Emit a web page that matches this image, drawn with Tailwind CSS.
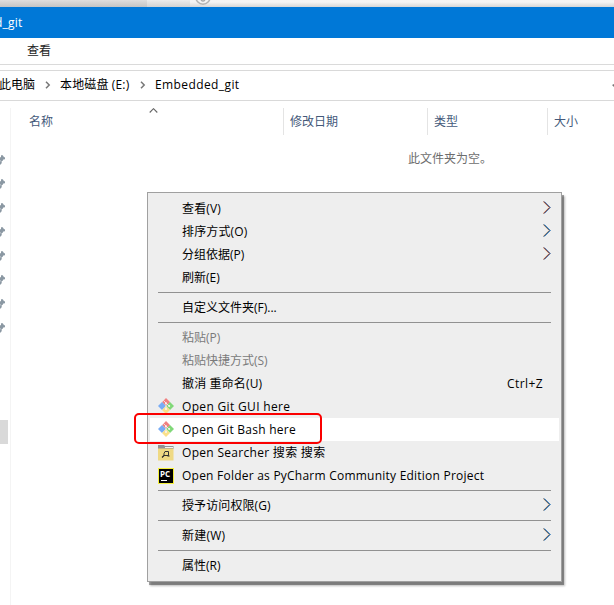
<!DOCTYPE html>
<html lang="zh-CN">
<head>
<meta charset="utf-8">
<title>Embedded_git</title>
<script src="https://cdn.jsdelivr.net/npm/@tailwindcss/browser@4"></script>
</head>
<body class="relative h-[605px] w-[614px] overflow-hidden bg-white font-['Open_Sans','Noto_Sans_CJK_SC',sans-serif] text-[12px] leading-[18px] text-black">
<svg class="hidden">
  <symbol id="chev" viewBox="0 0 8 14">
    <path d="M.2 .5L6.200 6.500L.2 12.500" fill="none" stroke="#e0a060" stroke-width="1"/>
    <path d="M1.500 .5L7.500 6.500L1.500 12.500" fill="none" stroke="#58a8e8" stroke-width="1"/>
    <path d="M.8 .5L6.800 6.500L.8 12.500" fill="none" stroke="currentColor" stroke-width="1"/>
  </symbol>
  <symbol id="crumb" viewBox="0 0 6 8"><path d="M1 .8L4.200 4L1 7.200" fill="none" stroke="#777" stroke-width="1.500"/></symbol>
  <symbol id="pin" viewBox="0 0 5 10"><path d="M0 2.500L1 2L1 0.300H2.800L4 2.300H5V4.200L3.300 4.500L2.500 6H1.700V8L.8 9.500H0V6.500H.4L.3 5H0Z" fill="#8b98a3"/></symbol>
  <symbol id="git" viewBox="0 0 16 16">
    <path d="M8 0L12.200 4.200L8 8L4 4.200Z" fill="#f08080"/>
    <path d="M12 4L16 8L12 12L8 8Z" fill="#80d878"/>
    <path d="M4 4L8 8L4 12L0 8Z" fill="#78acf5"/>
    <path d="M8 8L12 12L8 16L4 12Z" fill="#fae08a"/>
    <path d="M5.500 2.500L8 5V11M8 5L11 8" fill="none" stroke="#f4f4f4" stroke-width=".8"/>
    <circle cx="8" cy="5.200" r="1" fill="#f4f4f4"/><circle cx="8" cy="11" r="1" fill="#f4f4f4"/><circle cx="11.200" cy="8" r="1" fill="#f4f4f4"/>
  </symbol>
</svg>

<div class="flex h-[605px] flex-col">
  <div class="relative flex h-[7px] shrink-0 overflow-hidden">
    <div class="w-[147px] bg-linear-to-b from-[#dedede] to-[#c4c4c4]"></div>
    <div class="w-[43px] bg-linear-to-b from-[#ececec] to-[#d2d2d2]"></div>
    <div class="flex-1 bg-linear-to-b from-[#f4f4f4] from-30% to-[#d6d6d6]"></div>
    <svg class="absolute left-[194px] top-0 h-[7px] w-[18px]" viewBox="0 0 18 7"><circle cx="9" cy="-3" r="7.200" fill="none" stroke="#b4b4b4" stroke-width="1.500"/><path d="M7 0Q9 2 11 0" fill="none" stroke="#aaa" stroke-width="1.300"/></svg>
  </div>
  <header class="flex h-[31px] shrink-0 items-center overflow-hidden bg-[#0078d7] text-white"><span class="-ml-[5px] tracking-[0.200px]">d_git</span></header>
  <nav class="flex h-[27px] shrink-0 items-center border-b border-[#dadada] pl-[27px] text-[#222]">查看</nav>
  <div class="h-[5px] shrink-0"></div>
  <div class="flex h-[31px] shrink-0 items-center border-y border-[#d9d9d9] pb-px">
    <span class="-ml-px w-[46px] whitespace-nowrap">此电脑</span>
    <svg class="h-2 w-1.5"><use href="#crumb"/></svg>
    <span class="ml-[9px] w-[80px] whitespace-nowrap tracking-[0.150px]">本地磁盘 (E:)</span>
    <svg class="h-2 w-1.5"><use href="#crumb"/></svg>
    <span class="ml-[9px] tracking-[0.400px]">Embedded_git</span>
    <svg class="ml-auto h-1.5 w-0.5" viewBox="0 0 2 6"><path d="M0 3L2 2V5Z" fill="#777"/></svg>
  </div>
  <main class="flex flex-1">
    <aside class="mt-[7px] flex w-[11px] flex-col border-r border-[#f4f4f4] pt-[47px]">
      <div class="flex flex-col gap-[14px] text-[0px] leading-none">
        <svg class="h-2.5 w-[5px]"><use href="#pin"/></svg><svg class="h-2.5 w-[5px]"><use href="#pin"/></svg><svg class="h-2.5 w-[5px]"><use href="#pin"/></svg><svg class="h-2.5 w-[5px]"><use href="#pin"/></svg><svg class="h-2.5 w-[5px]"><use href="#pin"/></svg><svg class="h-2.5 w-[5px]"><use href="#pin"/></svg><svg class="h-2.5 w-[5px]"><use href="#pin"/></svg><svg class="h-2.5 w-[5px]"><use href="#pin"/></svg>
      </div>
      <div class="mt-[87px] h-6 w-2 bg-[#d9d9d9]"></div>
    </aside>
    <section class="flex-1 pt-[7px]">
      <div class="relative flex h-[27px] items-center text-[#44597a]">
        <div class="flex h-full w-[273px] items-center border-r border-[#e4e4e4] pl-[18px]">名称</div>
        <div class="flex h-full w-[144px] items-center border-r border-[#e4e4e4] pl-[6px]">修改日期</div>
        <div class="flex h-full w-[120px] items-center border-r border-[#e4e4e4] pl-[6px]">类型</div>
        <div class="pl-[6px]">大小</div>
        <svg class="absolute left-[138px] top-0 h-[5px] w-[9px]" viewBox="0 0 9 5"><path d="M.7 4.500L4.500 .7L8.300 4.500" fill="none" stroke="#666" stroke-width="1.100"/></svg>
      </div>
      <p class="mt-[15px] pl-[397px] text-[#6d6d6d]">此文件夹为空。</p>
    </section>
  </main>
</div>

<div class="absolute left-[147px] top-[192px] flex h-[390px] w-[415px] flex-col border border-[#a0a0a0] bg-[#eeeeee] px-0.5 py-1 shadow-[2px_3px_0px_0px_#00000055,3px_4px_2px_0px_#00000044] *:shrink-0">
  <div class="flex h-[23px] items-center justify-between pl-[32px] pr-[8px]"><span class="tracking-[0.150px]">查看(V)</span><svg class="mb-0.5 h-3.5 w-2 text-[#6d2530]"><use href="#chev"/></svg></div>
  <div class="flex h-[23px] items-center justify-between pl-[32px] pr-[8px]"><span class="tracking-[0.150px]">排序方式(O)</span><svg class="mb-0.5 h-3.5 w-2 text-[#24456f]"><use href="#chev"/></svg></div>
  <div class="flex h-[23px] items-center justify-between pl-[32px] pr-[8px]"><span>分组依据(P)</span><svg class="mb-0.5 h-3.5 w-2 text-[#6d2530]"><use href="#chev"/></svg></div>
  <div class="flex h-[23px] items-center pl-[32px]">刷新(E)</div>
  <div class="mx-2 my-[3px] h-px bg-[#919191]"></div>
  <div class="flex h-[23px] items-center pl-[32px]">自定义文件夹(F)...</div>
  <div class="mx-2 my-[3px] h-px bg-[#919191]"></div>
  <div class="flex h-[23px] items-center pl-[32px] text-[#7a7a7a]">粘贴(P)</div>
  <div class="flex h-[23px] items-center pl-[32px] text-[#7a7a7a]">粘贴快捷方式(S)</div>
  <div class="flex h-[23px] items-center justify-between pl-[32px] pr-[16px]"><span class="tracking-[0.150px]">撤消 重命名(U)</span><span class="tracking-[0.400px]">Ctrl+Z</span></div>
  <div class="flex h-[23px] items-center gap-2 pl-[8px]"><svg class="mb-px size-4"><use href="#git"/></svg><span class="tracking-[0.330px]">Open Git GUI here</span></div>
  <div class="flex h-[23px] items-center gap-2 bg-white pl-[8px]"><svg class="mb-px size-4"><use href="#git"/></svg><span class="tracking-[0.250px]">Open Git Bash here</span></div>
  <div class="flex h-[23px] items-center gap-2 pl-[8px]">
    <svg class="size-4" viewBox="0 0 16 16"><path d="M0 0H6L7 1H15.500V4H0Z" fill="#929292"/><path d="M7 2H15V3H7Z" fill="#f4f4f4"/><path d="M0 3.500H15.500V15.500H0Z" fill="#efd983"/><path d="M7 6.500H10.500V10.500H6V8.500Z" fill="none" stroke="#333" stroke-width="1"/><path d="M6 10.500L4 12.500M9.500 11H11.500" stroke="#222" stroke-width="1.100"/></svg>
    <span class="tracking-[0.300px]">Open Searcher 搜索 搜索</span></div>
  <div class="flex h-[23px] items-center gap-2 pl-[8px]">
    <span class="relative size-4 border border-[#f5f03c] bg-black text-white"><span class="absolute left-px top-px font-['Open_Sans',sans-serif] text-[8px] font-bold leading-[8px]">PC</span><span class="absolute bottom-[2px] left-[2px] h-px w-[6px] bg-white"></span></span>
    <span class="tracking-[0.230px]">Open Folder as PyCharm Community Edition Project</span></div>
  <div class="mx-2 my-[3px] h-px bg-[#919191]"></div>
  <div class="flex h-[23px] items-center justify-between pl-[32px] pr-[8px]"><span class="tracking-[0.100px]">授予访问权限(G)</span><svg class="mb-0.5 h-3.5 w-2 text-[#24456f]"><use href="#chev"/></svg></div>
  <div class="mx-2 my-[3px] h-px bg-[#919191]"></div>
  <div class="flex h-[23px] items-center justify-between pl-[32px] pr-[8px]"><span class="tracking-[0.200px]">新建(W)</span><svg class="mb-0.5 h-3.5 w-2 text-[#24456f]"><use href="#chev"/></svg></div>
  <div class="mx-2 my-[3px] h-px bg-[#919191]"></div>
  <div class="flex h-[23px] items-center pl-[32px]">属性(R)</div>
</div>
<div class="absolute left-[134px] top-[413px] h-[31px] w-[188px] rounded-[5px] border-2 border-[#fa0000]"></div>
</body>
</html>
